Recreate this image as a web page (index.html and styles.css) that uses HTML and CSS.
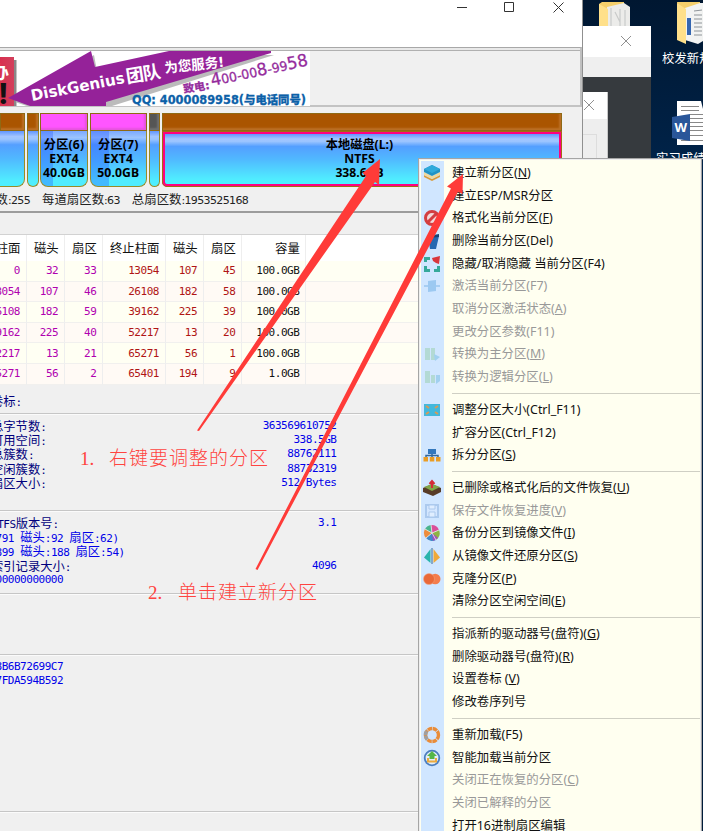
FILE: index.html
```html
<!DOCTYPE html>
<html lang="zh-CN">
<head>
<meta charset="utf-8">
<title>DiskGenius</title>
<link rel="stylesheet" href="styles.css">
</head>
<body>
<div class="desktop">
  <svg class="desktop-icons" width="120" height="160" viewBox="583 0 120 160">
    <path d="M599 4l3-2h22v24h-25z" fill="#f5cf6b"/>
    <path d="M607 7l17-4 6 4v19h-23z" fill="#ececea"/>
    <path d="M611 8v18M615 12l5 10M620 9v17M625 10v16" stroke="#c9cbca" stroke-width="1.2" fill="none"/>
    <path d="M599 4l9 5v17h-9z" fill="#ffe08a"/>
    <path d="M677 2h23v36h-19z" fill="#f5cf6b"/>
    <path d="M685 8l15-5h3v38l-5 3-13-4z" fill="#f2f3f2"/>
    <path d="M689 18v17" stroke="#3566b0" stroke-width="4"/>
    <path d="M694 11l8-1M694 15h8M694 19h8M694 23h8M694 27h8M694 31h8M694 35h8" stroke="#8e9499"/>
    <path d="M677 3l9 6v35l-9-4z" fill="#ffe08a"/>
    <path d="M677 101h24l2 8v36h-26z" fill="#fff"/>
    <path d="M681 106.500h18M681 110.500h18M690 114.500h13M690 118.500h13M690 122.500h13M690 126.500h13M690 130.500h13M681 135.500h22M681 140.500h22" stroke="#888"/>
    <path d="M672 117l18-3v27l-18-3z" fill="#2a5699"/>
    <text x="674.5" y="132" class="word-mark">W</text>
    <text x="662" y="62.500" class="desk-label">校发新规</text>
    <text x="656" y="162.500" class="desk-label">实习成绩</text>
  </svg>

  <div class="back-window">
    <div class="back-title"><svg width="12" height="12" viewBox="0 0 12 12"><path d="M1 1l10 10M11 1L1 11"/></svg></div>
    <div class="back-bar"></div>
    <div class="inner-window">
      <div class="inner-title"><svg width="12" height="12" viewBox="0 0 12 12"><path d="M1 1l10 10M11 1L1 11"/></svg></div>
      <div class="inner-box"></div>
    </div>
  </div>

  <main class="window">
    <header class="titlebar">
      <svg width="110" height="14" viewBox="0 0 110 14"><path d="M0 7.500h10M47.500 2.500h9v9h-9zM96.500 2.500l10 10M106.500 2.500l-10 10"/></svg>
    </header>
    <section class="banner-row">
      <svg class="banner" width="310" height="55" viewBox="0 51 310 55">
        <defs>
          <linearGradient id="sh" x1="0" x2="1"><stop offset="0" stop-color="#d8304f"/><stop offset="1" stop-color="#d2405c"/></linearGradient>
        </defs>
        <path d="M0 51h310v55H0z" fill="#fff"/>
        <path d="M3 60h13.500v46H3z" fill="#888"/>
        <path d="M0 57h14v49H0z" fill="url(#sh)"/>
        <text x="-9" y="79" class="b-white" font-size="18">办</text>
        <text x="-1" y="104" class="b-bang">!</text>
        <path d="M15 102L94 55l3 16L210 55h64L112 106H27z" fill="#aaa" opacity=".8"/>
        <path d="M8 98L91 51l4 16 74-16h102v2L106 102v4H30z" fill="#952299"/>
        <g class="b-white">
          <text transform="translate(32 101) rotate(-11)" font-size="15.500" textLength="95" lengthAdjust="spacingAndGlyphs">DiskGenius</text>
          <text transform="translate(127 83) rotate(-9)" font-size="18" textLength="35">团队</text>
          <text transform="translate(165 73) rotate(-6)" font-size="14" textLength="60" lengthAdjust="spacingAndGlyphs">为您服务!</text>
        </g>
        <g class="b-purple">
          <text transform="translate(184 93) rotate(-9)" font-size="11" font-weight="700">致电:</text>
          <text transform="translate(212 86) rotate(-12)" font-size="17" textLength="99" lengthAdjust="spacingAndGlyphs"><tspan>4</tspan><tspan font-size="13">00-00</tspan><tspan>8</tspan><tspan font-size="13">-99</tspan><tspan>58</tspan></text>
        </g>
        <text x="132" y="104" class="b-blue" textLength="174" lengthAdjust="spacingAndGlyphs">QQ: 4000089958(与电话同号)</text>
      </svg>
    </section>
    <section class="disk-map">
      <div class="part p-first"><i></i><b></b></div>
      <div class="part p-small"><i></i><b></b></div>
      <div class="part pink p-six"><i></i><b>分区(6)<br>EXT4<br>40.0GB</b></div>
      <div class="part pink p-seven"><i></i><b>分区(7)<br>EXT4<br>50.0GB</b></div>
      <div class="part gray p-gap"><i></i><b></b></div>
      <div class="part selected p-local"><i></i><b>本地磁盘(L:)<br>NTFS<br>338.6GB</b></div>
    </section>
    <section class="geometry"><span>数<em>:255</em></span><span>每道扇区数<em>:63</em></span><span>总扇区数<em>:1953525168</em></span></section>

    <table class="parts">
      <colgroup><col class="c1"><col class="c2"><col class="c2"><col class="c3"><col class="c2"><col class="c2"><col class="c4"><col></colgroup>
      <thead><tr><th><div>柱面</div></th><th>磁头</th><th>扇区</th><th>终止柱面</th><th>磁头</th><th>扇区</th><th>容量</th><th></th></tr></thead>
      <tbody>
        <tr><td><div>0</div></td><td>32</td><td>33</td><td>13054</td><td>107</td><td>45</td><td>100.0GB</td><td></td></tr>
        <tr><td><div>13054</div></td><td>107</td><td>46</td><td>26108</td><td>182</td><td>58</td><td>100.0GB</td><td></td></tr>
        <tr><td><div>26108</div></td><td>182</td><td>59</td><td>39162</td><td>225</td><td>39</td><td>100.0GB</td><td></td></tr>
        <tr><td><div>39162</div></td><td>225</td><td>40</td><td>52217</td><td>13</td><td>20</td><td>100.0GB</td><td></td></tr>
        <tr><td><div>52217</div></td><td>13</td><td>21</td><td>65271</td><td>56</td><td>1</td><td>100.0GB</td><td></td></tr>
        <tr><td><div>65271</div></td><td>56</td><td>2</td><td>65401</td><td>194</td><td>9</td><td>1.0GB</td><td></td></tr>
      </tbody>
    </table>

    <section class="details">
      <div class="group g-label"><p><span>卷标<em>:</em></span></p></div>
      <div class="group g-size">
        <p><span>总字节数<em>:</em></span><em>363569610752</em></p>
        <p><span>可用空间<em>:</em></span><em>338.5GB</em></p>
        <p><span>总簇数<em>:</em></span><em>88762111</em></p>
        <p><span>空闲簇数<em>:</em></span><em>88732319</em></p>
        <p><span>扇区大小<em>:</em></span><em>512 Bytes</em></p>
      </div>
      <div class="group g-ntfs">
        <p><span><em>NTFS</em>版本号<em>:</em></span><em>3.1</em></p>
        <p class="blue cut"><span><em>791 </em>磁头<em>:92 </em>扇区<em>:62)</em></span></p>
        <p class="blue cut"><span><em>899 </em>磁头<em>:188 </em>扇区<em>:54)</em></span></p>
        <p><span>索引记录大小<em>:</em></span><em>4096</em></p>
        <p class="cut"><em>00000000000</em></p>
      </div>
      <div class="group g-empty"></div>
      <div class="group g-guid">
        <p class="cut"><em>8B6B72699C7</em></p>
        <p class="cut"><em>7FDA594B592</em></p>
      </div>
      <div class="group g-end"></div>
    </section>
  </main>

  <nav class="menu">
    <ul>
      <li><svg viewBox="0 0 18 18"><path d="M1 11l8 4 8-4v2l-8 4-8-4z" fill="#d99b3d"/><path d="M1 8l8 4 8-4v3l-8 4-8-4z" fill="#eed9a0"/><path d="M1 5l8-4 8 4v3l-8 4-8-4z" fill="#2293c4"/><path d="M1 5l8-4 8 4-8 4z" fill="#30aadb"/></svg><span>建立新分区(<u>N</u>)</span></li>
      <li><span>建立ESP/MSR分区</span></li>
      <li><svg viewBox="0 0 18 18"><circle cx="9" cy="9" r="6.500" fill="#f2d8d8" stroke="#d33e40" stroke-width="3"/><path d="M5 13L13 5" stroke="#d33e40" stroke-width="3"/></svg><span>格式化当前分区(<u>F</u>)</span></li>
      <li><svg viewBox="0 0 18 18"><path d="M5 5l11-1-3 13H7z" fill="#2668b1"/><path d="M5 4l11-2v3L5 6z" fill="#164477"/></svg><span>删除当前分区(Del)</span></li>
      <li><svg viewBox="0 0 18 18"><path d="M2.500 7V3.500H7M2.500 11v4.500H7M11 15.500h4.500V11" fill="none" stroke="#35a99a" stroke-width="3"/><path d="M9 3l8-2-1 8-3-1-3-2z" fill="#d9363c"/></svg><span>隐藏/取消隐藏 当前分区(F4)</span></li>
      <li class="off"><svg viewBox="0 0 18 18"><path d="M1 9h16" stroke="#5ca4dd" stroke-width="2"/><path d="M5 4l8-1v11l-8 1z" fill="#3e94da"/></svg><span>激活当前分区(F7)</span></li>
      <li class="off"><span>取消分区激活状态(<u>A</u>)</span></li>
      <li class="off"><span>更改分区参数(F11)</span></li>
      <li class="off"><svg viewBox="0 0 18 18"><path d="M2 3h5v12H2zM8 3h4v12H8z" fill="#7fc486"/><path d="M11 9l6 3-5 4z" fill="#4ba8d5"/></svg><span>转换为主分区(<u>M</u>)</span></li>
      <li class="off"><svg viewBox="0 0 18 18"><path d="M2 3h5v12H2zM8 7h4v8H8z" fill="#7fc486"/><path d="M13 7h4v6l-4 3z" fill="#4ba8d5"/></svg><span>转换为逻辑分区(<u>L</u>)</span></li>
      <li class="sep"></li>
      <li><svg viewBox="0 0 18 18"><path d="M1 3h16v12H1z" fill="#42b8dd"/><path d="M3 5l3 2M15 5l-3 2M3 13l3-2M15 13l-3-2" stroke="#d99b54" stroke-width="2"/></svg><span>调整分区大小(Ctrl_F11)</span></li>
      <li><span>扩容分区(Ctrl_F12)</span></li>
      <li><svg viewBox="0 0 18 18"><path d="M3 13V9.500h12V13M9 8v5" stroke="#34699c" fill="none" stroke-width="1.500"/><path d="M5 3h8v5H5z" fill="#3378bd"/><path d="M.5 11h4.500v4.500H.5zM6.800 11h4.500v4.500H6.800zM13 11h4.500v4.500H13z" fill="#e99d25"/></svg><span>拆分分区(<u>S</u>)</span></li>
      <li class="sep"></li>
      <li><svg viewBox="0 0 18 18"><path d="M0 9l9-4 9 4v4l-8 4-10-4z" fill="#573c27"/><path d="M1 8l8-3 8 3-8 4z" fill="#82a649"/><path d="M9 2v7M6.500 5L9 2l2.500 3" fill="none" stroke="#d42c38" stroke-width="2"/></svg><span>已删除或格式化后的文件恢复(<u>U</u>)</span></li>
      <li class="off"><svg viewBox="0 0 18 18"><path d="M3 3h12v12H3z" fill="#dceaff" stroke="#6c97d1" stroke-width="2"/><path d="M6 3h6v4H6zM6 10h6v5H6z" fill="#fff" stroke="#6c97d1"/></svg><span>保存文件恢复进度(<u>V</u>)</span></li>
      <li><svg viewBox="0 0 18 18"><path d="M9 9L3 14A8 8 0 0 1 2 5z" fill="#ed8d3d"/><path d="M9 9L2 5a8 8 0 0 1 6-4z" fill="#4ab48d"/><path d="M9 9L8 1a8 8 0 0 1 8 5z" fill="#da4f9a"/><path d="M9 9l7-3a8 8 0 0 1-3 10z" fill="#8eb444"/><path d="M9 9l4 7a8 8 0 0 1-10-2z" fill="#4288c6"/><path d="M9 9l1 8 5-3z" fill="#a14dc1"/><path d="M9 9L3 14M9 9L2 5M9 9L8 1M9 9l7-3M9 9l4 7" stroke="#e8f0e8" stroke-width=".8"/></svg><span>备份分区到镜像文件(<u>I</u>)</span></li>
      <li><svg viewBox="0 0 18 18"><path d="M7.500 2v14L1 10.500z" fill="#29b4ac"/><path d="M9 1v16" stroke="#85a8cc" stroke-width="2"/><path d="M10.500 2v14l6.500-5.500z" fill="#f0a938"/></svg><span>从镜像文件还原分区(<u>S</u>)</span></li>
      <li><svg viewBox="0 0 18 18"><circle cx="12.200" cy="9" r="5.300" fill="#f47d4d"/><circle cx="6" cy="9" r="5.500" fill="#e96939" stroke="#f3a681" stroke-width=".5"/></svg><span>克隆分区(<u>P</u>)</span></li>
      <li><span>清除分区空闲空间(<u>E</u>)</span></li>
      <li class="sep"></li>
      <li><span>指派新的驱动器号(盘符)(<u>G</u>)</span></li>
      <li><span>删除驱动器号(盘符)(<u>R</u>)</span></li>
      <li><span>设置卷标 (<u>V</u>)</span></li>
      <li><span>修改卷序列号</span></li>
      <li class="sep"></li>
      <li><svg viewBox="0 0 18 18"><circle cx="9" cy="9" r="6.500" fill="none" stroke="#e98c38" stroke-width="3.400" stroke-dasharray="4.500 .6"/><path d="M4.400 13.600A6.500 6.500 0 0 1 4.400 4.400" fill="none" stroke="#a0a0a0" stroke-width="3.600" stroke-dasharray="4 .7"/></svg><span>重新加载(F5)</span></li>
      <li><svg viewBox="0 0 18 18"><circle cx="9" cy="9" r="7.300" fill="#e3eef8" stroke="#4b7ebf" stroke-width="1.800"/><path d="M9 2l5 5h-2.500v3h-5V7H4z" fill="#55b648"/><path d="M5 9v3.500h8V9" fill="none" stroke="#ecaa3d" stroke-width="2"/></svg><span>智能加载当前分区</span></li>
      <li class="off"><span>关闭正在恢复的分区(<u>C</u>)</span></li>
      <li class="off"><span>关闭已解释的分区</span></li>
      <li><span>打开16进制扇区编辑</span></li>
    </ul>
  </nav>

  <svg class="notes" width="703" height="831" viewBox="0 0 703 831">
    <g fill="#ff3b38">
      <path d="M197 430.500L366 176l-3.500-3 17.500-14-1 26-4-3L199 431z"/>
      <path d="M255.500 569L451 188.500l-4-2 16-12.500-.5 20-4.500-2.300L257.500 570z"/>
    </g>
    <text y="465"><tspan x="80">1.</tspan><tspan x="109" textLength="159">右键要调整的分区</tspan></text>
    <text y="599"><tspan x="148">2.</tspan><tspan x="178" textLength="139">单击建立新分区</tspan></text>
  </svg>
</div>
</body>
</html>
```
FILE: styles.css
```css
* { box-sizing: border-box; }
body { margin: 0; }
p, ul { margin: 0; padding: 0; }
em, i { font-style: normal; }

.desktop {
  position: relative;
  width: 703px;
  height: 831px;
  overflow: hidden;
  background: linear-gradient(#001731, #002349 20%, #001c3a);
  font-family: "Liberation Sans", "Noto Sans CJK SC", sans-serif;
}
.desktop-icons { position: absolute; left: 583px; top: 0; }
.desk-label { fill: #fff; font: 12.4px "Noto Sans CJK SC", sans-serif; }
.word-mark { fill: #fff; font: bold 13px "Open Sans", sans-serif; }

.back-window {
  position: absolute;
  left: 583px;
  top: 26px;
  width: 68px;
  height: 140px;
  background: #363a3e;
}
.back-title { height: 31px; background: #fff; padding: 9px 0 0 37px; }
.back-title svg, .inner-title svg { display: block; fill: none; stroke: #909090; }
.back-bar { height: 20px; background: #efefef; }
.inner-window { width: 25px; margin-top: 15px; height: 74px; background: #eee; border-right: 1px solid #c8c8c8; }
.inner-title { height: 27px; background: #fff; padding-top: 7px; }
.inner-box { width: 14px; height: 40px; margin-top: 15px; border: 1px solid #ddd; border-left: 0; }

.window {
  position: absolute;
  left: 0;
  top: 0;
  width: 583px;
  height: 831px;
  background: #f0f0f0;
  border-right: 1px solid #909090;
  overflow: hidden;
}
.titlebar { height: 47px; background: #fff; padding-left: 457px; }
.titlebar svg { display: block; fill: none; stroke: #333; }
.banner-row {
  height: 60px;
  padding-top: 2px;
  border-top: 1px solid #a8a8a8;
  border-bottom: 2px solid #c3c3c3;
  box-shadow: inset 0 2px #e9e9e9, inset 0 3px #b0b0b0;
  border-right: 2px solid #c0c0c0;
}
.banner { display: block; margin-top: 1px; }
.b-white { fill: #fff; font-family: "DejaVu Sans", "Noto Sans CJK SC", sans-serif; font-weight: 700; }
.b-bang { fill: #111; font: 900 30px Roboto, sans-serif; }
.b-purple { fill: #952c9d; font-family: "DejaVu Sans", "Noto Sans CJK SC", sans-serif; stroke: #952c9d; stroke-width: .3px; }
.b-blue { fill: #0c61a8; font: 900 11.5px "DejaVu Sans", "Noto Sans CJK SC", sans-serif; stroke: #0c61a8; stroke-width: .3px; }

.disk-map { display: flex; height: 84px; padding-top: 6px; gap: 1.5px; }
.part { height: 73.5px; display: flex; flex-direction: column; flex: none; }
.part i {
  height: 18px;
  background: #aa5500;
  border: 1px solid #8f6914;
  box-shadow: inset -2px -2px 2px #bb7025;
}
.part b {
  flex: 1;
  padding-top: 7px;
  border: 1.5px solid #978b29;
  border-top: 0;
  border-radius: 0 0 8px 8px;
  background: linear-gradient(#6095ff 0, #a3c5ff 10%, #9bc4ff 15%, #549fff 25%, #50b8ff 50%, #50ecff 90%, #4df0ff);
  color: #000;
  font: bold 12.2px/14.2px "Noto Sans", "Noto Sans CJK SC", sans-serif;
  display: flex;
  flex-direction: column;
  display: block;
  text-align: center;
  white-space: nowrap;
}
.pink i { background: #ff55ff; box-shadow: inset -2px -2px 2px #e655dd; }
.gray i { background: #555; box-shadow: inset -2px -2px 2px #707070; }
.p-first { width: 25px; }
.p-first b { border-left: 0; border-bottom-left-radius: 0; }
.p-small { width: 12px; }
.p-six { width: 48px; }
.p-six b, .p-seven b { letter-spacing: .15px; margin: 0; }
.p-seven { width: 57.5px; }
.p-gap { width: 11.500px; }
.p-local { width: 400px; }
.p-six b { background: linear-gradient(90deg, rgba(40, 90, 255, .35) 12px, transparent 12px), linear-gradient(#7ba9ff, #9bc4ff 12%, #549fff 25%, #50b8ff 50%, #50ecff 90%); }
.p-seven b { background: linear-gradient(90deg, rgba(40, 90, 255, .35) 18px, transparent 18px), linear-gradient(#7ba9ff, #9bc4ff 12%, #549fff 25%, #50b8ff 50%, #50ecff 90%); }
.selected b { border: 3px solid #ff0080; border-radius: 0 0 5px 5px; outline: 1px solid #a46b14; outline-offset: -1px; padding: 4px 4px 0 0; }

.geometry {
  display: flex;
  height: 22px;
  border-bottom: 2px solid #9c9c9c;
  margin-left: -4.500px;
  gap: 12px;
  color: #222;
  font: 12.4px/17px "Noto Sans CJK SC", sans-serif;
}
.geometry em { font: 11px "DejaVu Sans", sans-serif; letter-spacing: -.63px; }

.parts {
  margin-top: 21px;
  width: 583px;
  table-layout: fixed;
  border-collapse: separate;
  border-spacing: 0;
  border-top: 1px solid #d2d2d2;
  background: #fff;
}
.c1 { width: 27px; }
.c2 { width: 38.2px; }
.c3 { width: 62.600px; }
.c4 { width: 64px; }
.parts th, .parts td { padding: 0 6px 0 0; text-align: right; white-space: nowrap; border-right: 1px solid #eee; overflow: hidden; }
.parts th { height: 26px; font: 12.4px/25px "Noto Sans CJK SC", sans-serif; color: #111; padding-right: 5.500px; }
.parts td { height: 20.6px; font: 11px/19px "DejaVu Sans Mono", monospace; letter-spacing: -.47px; border-bottom: 1px solid #f1f0ee; background: #fffff3; color: #b01414; }
.parts tr:nth-child(even) td { background: #fffaf5; }
.parts td:nth-child(-n+3) { color: #b000b0; }
.parts td:nth-child(7) { color: #111; }
.parts th div, .parts td div { display: flex; justify-content: flex-end; }

.details { color: #00007c; font: 12.3px/14.4px "Noto Sans CJK SC", sans-serif; }
.group { border-bottom: 1px solid #c6c6c6; box-shadow: 0 1px #fbfbfb; width: 583px; }
.group p { display: flex; justify-content: space-between; height: 14.4px; width: 345.500px; margin-left: -9px; white-space: nowrap; }
.group em { color: #0000e8; font: 11px/14.4px "DejaVu Sans Mono", monospace; letter-spacing: -.47px; white-space: pre; }
.group span em { color: inherit; }
.group .blue { color: #0000e8; }
.group .cut { margin-left: -4.5px; }
.g-label { height: 29px; padding-top: 9px; }
.g-size { height: 97px; padding-top: 5px; }
.g-ntfs { height: 83px; padding-top: 5px; }
.g-empty { height: 61px; }
.g-guid { height: 157px; padding-top: 5px; }
.g-end { border: 0; }

.menu {
  position: absolute;
  left: 418px;
  top: 158px;
  width: 284px;
  height: 690px;
  padding: 2px 1px 0 2px;
  border: 1px solid #a5a5a5;
  background: #fffff0;
  box-shadow: inset 0 0 0 1px #eee;
}
.menu ul { list-style: none; background: linear-gradient(90deg, #d0e6ff 23px, transparent 23px); height: 690px; padding-top: .8px; }
.menu li { display: flex; align-items: center; height: 22.67px; padding-left: 31px; color: #111; font: 12.4px/20px "Noto Sans", "Noto Sans CJK SC", sans-serif; white-space: pre; }
.menu li svg { width: 18px; height: 18px; margin: 0 11px 0 -29px; flex: none; }
.menu .off { color: #999; }
.menu .off svg { opacity: .35; }
.menu .sep { height: 10.2px; padding: 0 0 0 31px; }
.menu .sep::before { content: ""; flex: 1; height: 1px; background: #cfcfc4; }
.menu u { text-underline-offset: 1px; }

.notes { position: absolute; left: 0; top: 0; pointer-events: none; }
.notes text { fill: #ff4440; font: 300 19px "Liberation Serif", "Noto Sans CJK SC", serif; white-space: pre; }
```
